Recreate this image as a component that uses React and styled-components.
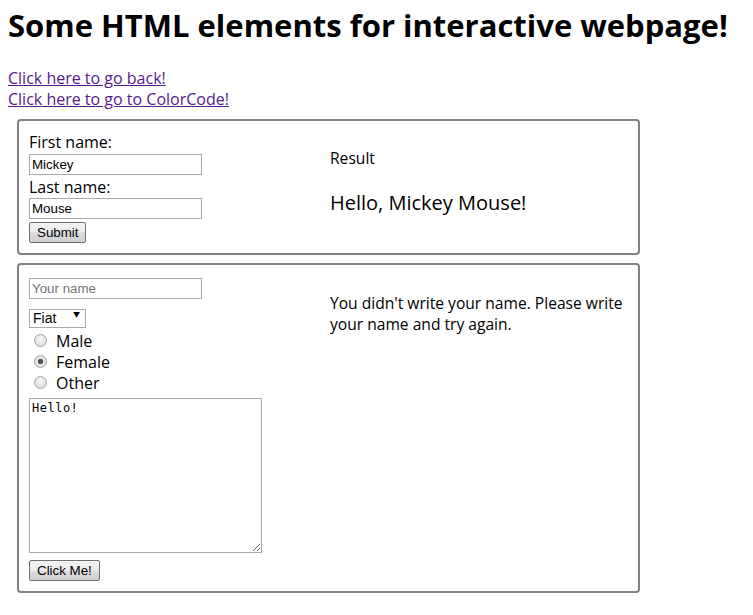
import React, { useState } from "react";
import styled, { createGlobalStyle } from "styled-components";

const GlobalStyle = createGlobalStyle`
  body {
    margin: 8px;
    background: #ffffff;
    color: #000000;
    font-family: "Open Sans", "Noto Sans CJK KR", sans-serif;
    font-size: 16px;
  }
`;

const Heading = styled.h1`
  font-size: 31px;
  font-weight: 700;
  line-height: 42px;
  margin: -4px 0 22px;
  white-space: nowrap;
`;

const Links = styled.div`
  display: flex;
  flex-direction: column;
  align-items: flex-start;
  line-height: 21px;
  font-size: 16px;
`;

const Link = styled.a`
  color: #551a8b;
  text-decoration: underline;
`;

const Panel = styled.form`
  display: flex;
  width: 599px;
  margin: ${({ $first }) => ($first ? 9 : 8)}px 0 0 9px;
  padding: 10px;
  border: 2px solid #828282;
  border-radius: 4px;
`;

const Left = styled.div`
  width: 301px;
  display: flex;
  flex-direction: column;
  align-items: flex-start;
`;

const Right = styled.div`
  flex: 1;
  padding-top: ${({ $top }) => $top}px;
  font-size: 15.6px;
  line-height: 21px;
`;

const Label = styled.label`
  font-size: 16px;
  line-height: 22px;
`;

const TextInput = styled.input`
  box-sizing: border-box;
  width: 173px;
  height: 21px;
  margin: ${({ $mt }) => $mt || 0}px 0 ${({ $mb }) => $mb || 0}px;
  padding: 1px 2px;
  border: 1px solid #a9a9a9;
  font-family: "Liberation Sans", Arial, sans-serif;
  font-size: 13.33px;
  color: #000;
  outline: none;
  &::placeholder {
    color: #757575;
  }
`;

const Button = styled.button`
  box-sizing: border-box;
  height: ${({ $h }) => $h}px;
  margin-top: ${({ $mt }) => $mt}px;
  padding: 0 7px;
  border: 1px solid #707070;
  border-radius: 2px;
  background: linear-gradient(#f2f2f2, #ebebeb 50%, #dddddd 50%, #cfcfcf);
  font-family: "Liberation Sans", Arial, sans-serif;
  font-size: 13.33px;
  color: #000;
`;

const SelectWrap = styled.div`
  position: relative;
  margin-top: 7px;
  height: 19px;
`;

const Select = styled.select`
  appearance: none;
  box-sizing: border-box;
  width: 57px;
  height: 19px;
  padding: 0 0 0 3px;
  border: 1px solid #a9a9a9;
  border-radius: 0;
  background: #fff;
  font-family: "Liberation Sans", Arial, sans-serif;
  font-size: 14px;
  color: #000;
`;

const Arrow = styled.span`
  position: absolute;
  left: 44px;
  top: 5px;
  font-size: 7px;
  line-height: 8px;
  pointer-events: none;
`;

const RadioGroup = styled.div`
  display: flex;
  flex-direction: column;
  margin-top: 5px;
`;

const RadioRow = styled.label`
  display: flex;
  align-items: center;
  height: 21px;
  font-size: 16px;
`;

const Radio = styled.input`
  appearance: none;
  box-sizing: border-box;
  width: 13px;
  height: 13px;
  margin: 0 9px 0 5px;
  border: 1px solid #a4a4a4;
  border-radius: 50%;
  background: radial-gradient(circle at 50% 35%, #f6f6f6, #d6d6d6);
  &:checked {
    background: radial-gradient(circle, #555 0 2.5px, #e4e4e4 3px);
  }
`;

const TextArea = styled.textarea`
  box-sizing: border-box;
  width: 233px;
  height: 155px;
  margin-top: 5px;
  padding: 2px;
  border: 1px solid #a9a9a9;
  font-family: "DejaVu Sans Mono", monospace;
  font-size: 12px;
  letter-spacing: 0.5px;
  color: #000;
  outline: none;
  resize: both;
`;

const Greeting = styled.div`
  margin-top: 21px;
  font-size: 20px;
  line-height: 26px;
`;

export default function App() {
  const [first, setFirst] = useState("Mickey");
  const [last, setLast] = useState("Mouse");
  const [gender, setGender] = useState("female");
  const [car, setCar] = useState("fiat");

  return (
    <>
      <GlobalStyle />
      <Heading>Some HTML elements for interactive webpage!</Heading>
      <Links>
        <Link href="#back">Click here to go back!</Link>
        <Link href="#color">Click here to go to ColorCode!</Link>
      </Links>

      <Panel $first onSubmit={(e) => e.preventDefault()}>
        <Left>
          <Label>First name:</Label>
          <TextInput value={first} onChange={(e) => setFirst(e.target.value)} $mt={1} $mb={1} />
          <Label>Last name:</Label>
          <TextInput value={last} onChange={(e) => setLast(e.target.value)} />
          <Button $mt={3} $h={21}>Submit</Button>
        </Left>
        <Right $top={17}>
          <div>Result</div>
          <Greeting>Hello, {first} {last}!</Greeting>
        </Right>
      </Panel>

      <Panel onSubmit={(e) => e.preventDefault()}>
        <Left>
          <TextInput placeholder="Your name" $mt={3} />
          <SelectWrap>
            <Select value={car} onChange={(e) => setCar(e.target.value)}>
              <option value="fiat">Fiat</option>
              <option value="volvo">Volvo</option>
              <option value="audi">Audi</option>
            </Select>
            <Arrow>▼</Arrow>
          </SelectWrap>
          <RadioGroup>
            {["Male", "Female", "Other"].map((g) => (
              <RadioRow key={g}>
                <Radio
                  type="radio"
                  name="gender"
                  checked={gender === g.toLowerCase()}
                  onChange={() => setGender(g.toLowerCase())}
                />
                {g}
              </RadioRow>
            ))}
          </RadioGroup>
          <TextArea defaultValue="Hello!" />
          <Button $mt={7} $h={21}>Click Me!</Button>
        </Left>
        <Right $top={18}>
          You didn't write your name. Please write your name and try again.
        </Right>
      </Panel>
    </>
  );
}
